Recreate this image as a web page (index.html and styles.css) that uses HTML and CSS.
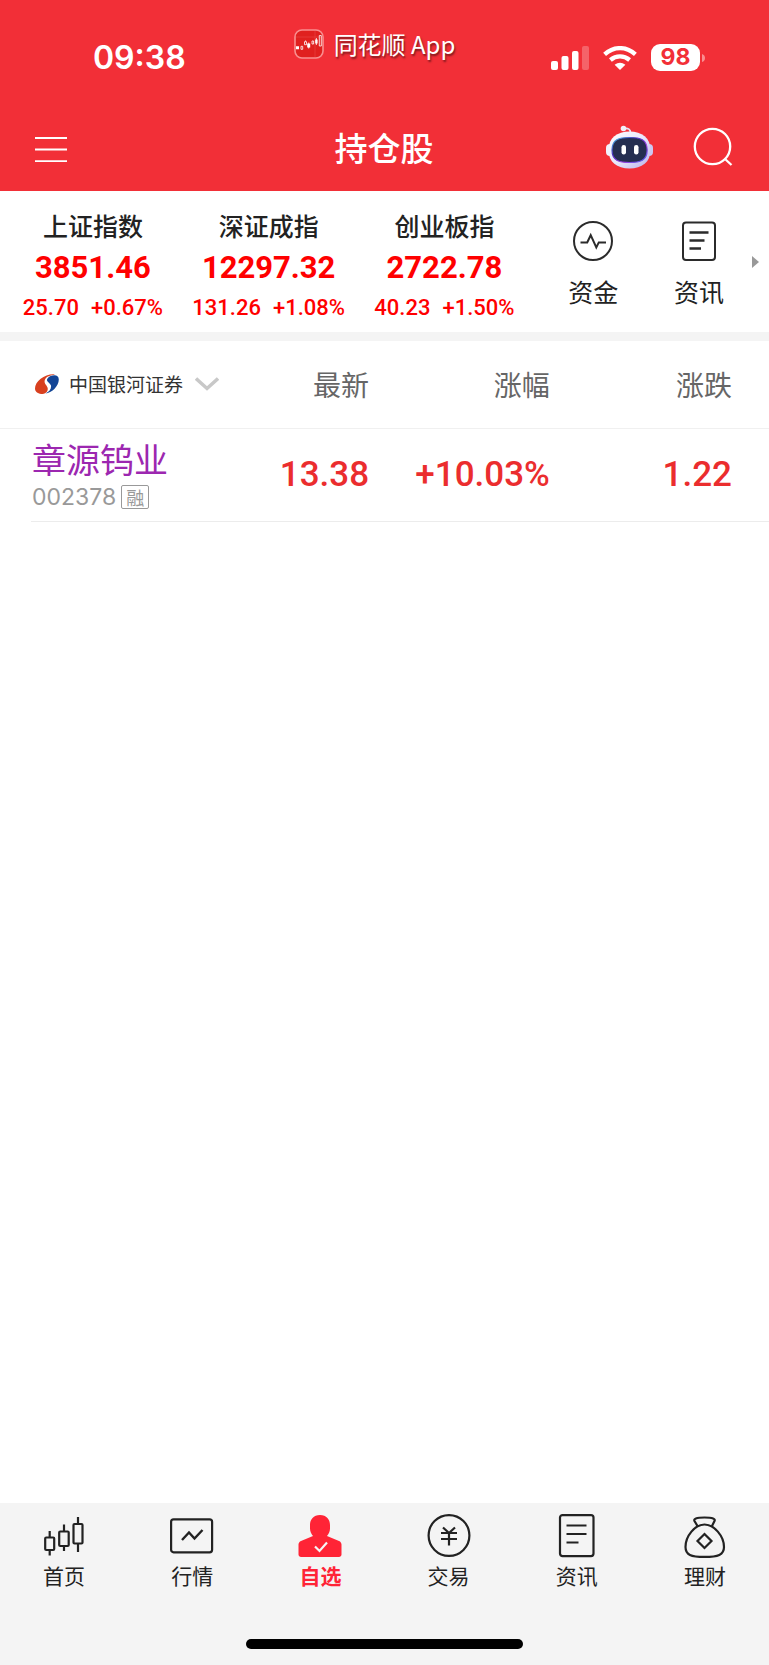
FILE: index.html
```html
<!DOCTYPE html>
<html lang="zh-CN">
<head>
<meta charset="utf-8">
<meta name="viewport" content="width=device-width, initial-scale=1">
<title>持仓股</title>
<link rel="stylesheet" href="styles.css">
</head>
<body>
<div class="app">
  <header class="top">
    <div class="status">
      <time class="clock">09:38</time>
      <div class="brand">
        <svg class="brand-icon" width="30" height="30" viewBox="0 0 30 30" fill="none">
          <rect x="1" y="1" width="28" height="28" rx="7" fill="#e0201f" stroke="#f98f90" stroke-width="1.6"/>
          <path d="M2 8h26M21 2v26" stroke="#ea4646" stroke-width=".6"/>
          <path d="M2 17.300h3v3H2zM13.200 14.500h3v4h-3zM21.200 10.500h2.400v4h-2.400z" fill="#fff"/>
          <path d="M7 17.300h1.700v3H7zM10.500 12.700h2v3h-2zM18 12h1.600v3H18zM25.300 6.500h2v10.500h-2z" stroke="#fff" stroke-width=".8"/>
          <path d="M11.500 11.500v1M14.700 13.500v6M22.400 9v7" stroke="#fff" stroke-width=".8"/>
        </svg>
        <span>同花顺 App</span>
      </div>
      <div class="signals">
        <svg width="38" height="24" viewBox="0 0 38 24" fill="#fff">
          <rect x="0" y="15" width="7" height="9" rx="2"/>
          <rect x="10.500" y="10" width="7" height="14" rx="2"/>
          <rect x="21" y="5" width="6.500" height="19" rx="2"/>
          <rect x="31" y="0" width="7" height="24" rx="2" opacity=".25"/>
        </svg>
        <svg width="34" height="24" viewBox="0 0 34 24" fill="none" stroke="#fff" stroke-width="4.300">
          <path d="M1.600 8.300Q8.600 2.100 17 2.100T32.400 8.300"/>
          <path d="M7.400 14Q11.700 10.300 17 10.300T26.600 14"/>
          <path d="M11.600 18.800Q17 14.700 22.400 18.800L17 24z" fill="#fff" stroke="none"/>
        </svg>
        <div class="battery"><span class="charge">98</span><svg width="3" height="8" viewBox="0 0 3 8"><path d="M0 0Q3 1 3 4T0 8z" fill="#f98e91"/></svg></div>
      </div>
    </div>
    <div class="titlebar">
      <button class="icon-button" type="button" aria-label="菜单">
        <svg width="32" height="27" viewBox="0 0 32 27" stroke="#fff" stroke-width="1.800"><path d="M0 2h32M0 13.500h32M0 25.200h32"/></svg>
      </button>
      <h1 class="title">持仓股</h1>
      <div class="actions">
        <button class="icon-button" type="button" aria-label="智能助手">
          <svg width="47" height="44" viewBox="0 0 47 44">
            <defs>
              <linearGradient id="shell" x1="0" y1="0" x2="1" y2="1"><stop offset="0" stop-color="#fff"/><stop offset=".5" stop-color="#e9e7fa"/><stop offset="1" stop-color="#b9b2ea"/></linearGradient>
              <linearGradient id="rim" x1="0" y1="0" x2="1" y2="1"><stop offset="0" stop-color="#48c9e8"/><stop offset=".35" stop-color="#4a2fc0"/><stop offset=".65" stop-color="#9b3fe0"/><stop offset="1" stop-color="#4462e8"/></linearGradient>
            </defs>
            <path d="M18 3.500Q24.500 2.500 24.500 8" fill="none" stroke="#e6e3f5" stroke-width="1.800"/>
            <circle cx="17.500" cy="3.500" r="2.800" fill="#f1f0fa"/>
            <rect x="0" y="19" width="9" height="12" rx="4" fill="#f2f1fc"/>
            <rect x="38" y="19" width="9" height="12" rx="4" fill="#ccc7f2"/>
            <path d="M23.500 6.500C36 6.500 44.500 13 44.500 25S36 43.500 23.500 43.500 2.500 37 2.500 25 11 6.500 23.500 6.500z" fill="url(#shell)"/>
            <path d="M23.500 12.500C34 12.500 41.200 14.500 41.200 25S34 37.500 23.500 37.500 6 35.500 6 25 13 12.500 23.500 12.500z" fill="#252e50" stroke="url(#rim)" stroke-width="1.200"/>
            <rect x="15.500" y="20" width="4.500" height="9.500" rx="2.200" fill="#fff"/>
            <rect x="28" y="20" width="4.500" height="9.500" rx="2.200" fill="#fff"/>
          </svg>
        </button>
        <button class="icon-button" type="button" aria-label="搜索">
          <svg width="40" height="40" viewBox="0 0 40 40" fill="none" stroke="#fff" stroke-width="2.300"><circle cx="19.500" cy="19.500" r="17.700"/><path d="M31.500 31.500l7 6.500"/></svg>
        </button>
      </div>
    </div>
  </header>

  <section class="market">
    <div class="indices">
      <a class="index" href="#sh"><span class="index-name">上证指数</span><strong class="index-value">3851.46</strong><span class="index-change"><span>25.70</span><span>+0.67%</span></span></a>
      <a class="index" href="#sz"><span class="index-name">深证成指</span><strong class="index-value">12297.32</strong><span class="index-change"><span>131.26</span><span>+1.08%</span></span></a>
      <a class="index" href="#cyb"><span class="index-name">创业板指</span><strong class="index-value">2722.78</strong><span class="index-change"><span>40.23</span><span>+1.50%</span></span></a>
    </div>
    <div class="tools">
      <a class="tool" href="#funds">
        <svg width="40" height="40" viewBox="0 0 40 40" fill="none" stroke="#2b2b2b" stroke-width="2"><circle cx="20" cy="20" r="19"/><path d="M7.500 21.500h6.700l3.500-7.300 5.600 12.200 2.500-5H33"/></svg>
        <span>资金</span>
      </a>
      <a class="tool" href="#news">
        <svg width="34" height="40" viewBox="0 0 34 40" fill="none" stroke="#2b2b2b" stroke-width="2"><rect x="1" y="1.500" width="32" height="37.500" rx="3"/><path d="M7.500 11.500h19M7.500 19.500h15M7.500 27.500h11.500" stroke-width="2.300"/></svg>
        <span>资讯</span>
      </a>
    </div>
    <svg class="more" width="7" height="12" viewBox="0 0 7 12"><path d="M0 0l7 6-7 6z" fill="#999"/></svg>
  </section>

  <main class="holdings">
    <table class="table">
      <thead>
        <tr>
          <th class="col-stock" scope="col">
            <button class="broker" type="button">
              <svg width="24" height="20" viewBox="0 0 24 20"><path d="M18.500.2C9 .2 0 7.500 0 14.500 0 18.500 4 20 7.500 20 11.500 19.500 13.500 16.500 12.500 13.500 11.500 10.500 8.500 9.500 10 5.500 11.500 2.500 15 1.500 20 .8z" fill="#d8401f"/><path d="M12.500 4.500C15.500.8 23.800-.5 23.800 5.500 23.800 12.500 16.500 19 10.500 19.500 14.500 17.500 16.500 14.500 16 11.500 15 8.500 10.500 7.500 12.500 4.500z" fill="#134596"/></svg>
              <span>中国银河证券</span>
              <svg class="chevron" width="24" height="14" viewBox="0 0 24 14" fill="none" stroke="#c8c8c8" stroke-width="3.500"><path d="M1 1.500l11 10 11-10"/></svg>
            </button>
          </th>
          <th class="col-price" scope="col">最新</th>
          <th class="col-rate" scope="col">涨幅</th>
          <th class="col-diff" scope="col">涨跌</th>
        </tr>
      </thead>
      <tbody>
        <tr>
          <td><a class="stock" href="#002378"><span class="stock-name">章源钨业</span><span class="stock-meta"><span class="stock-code">002378</span><span class="tag">融</span></span></a></td>
          <td>13.38</td>
          <td>+10.03%</td>
          <td>1.22</td>
        </tr>
      </tbody>
    </table>
  </main>

  <footer class="bottom">
    <nav class="tabs">
      <a class="tab" href="#home">
        <svg width="44" height="44" viewBox="0 0 44 44" fill="none" stroke="#222" stroke-width="2.200"><rect x="3.200" y="23.500" width="9" height="12.500" rx="1"/><path d="M7.700 17v6.500M7.700 36v5.500"/><rect x="17.200" y="17.500" width="9.500" height="14.500" rx="1"/><path d="M22 10.500v7M22 32v5"/><rect x="31.500" y="10" width="9" height="19.500" rx="1"/><path d="M36 3v7M36 29.500V38"/></svg>
        <span>首页</span>
      </a>
      <a class="tab" href="#quotes">
        <svg width="44" height="44" viewBox="0 0 44 44" fill="none" stroke="#222" stroke-width="2.200"><rect x="1.100" y="5.300" width="41" height="33" rx="2.500"/><path d="M12 26l7-7.500 5.500 6 8-8.500" stroke-width="2.400"/></svg>
        <span>行情</span>
      </a>
      <a class="tab tab-active" href="#watchlist" aria-current="page">
        <svg width="44" height="44" viewBox="0 0 44 44"><path d="M22 1C28.500 1 32 5.500 32 11v3.500C32 18 30.500 20 29 22l12 5c1.500.6 2.500 2 2.500 3.500v10c0 1.500-1.200 2.500-2.500 2.500H3C1.700 43 .5 42 .5 40.500v-10C.5 29 1.500 27.600 3 27l12-5c-1.500-2-3-4-3-7.500V11C12 5.500 15.500 1 22 1z" fill="#ff2436"/><path d="M17 32.500l4.500 4.500 7.500-8.500" fill="none" stroke="#f5f5f5" stroke-width="2.200"/></svg>
        <span>自选</span>
      </a>
      <a class="tab" href="#trade">
        <svg width="44" height="44" viewBox="0 0 44 44" fill="none" stroke="#222" stroke-width="2.200"><circle cx="22" cy="21.500" r="20.400"/><path d="M16 13.500l6 5.500 6-5.500M14 19h16M14 25h16M22 19v12.500"/></svg>
        <span>交易</span>
      </a>
      <a class="tab" href="#info">
        <svg width="44" height="44" viewBox="0 0 44 44" fill="none" stroke="#222" stroke-width="2.200"><rect x="5" y="1.100" width="33.500" height="41" rx="2.500"/><path d="M11.500 11.500h20M11.500 20h20M11.500 28.500h12"/></svg>
        <span>资讯</span>
      </a>
      <a class="tab" href="#wealth">
        <svg width="44" height="44" viewBox="0 0 44 44" fill="none" stroke="#222" stroke-width="2.200"><path d="M14.500 12L11.500 7C10.500 5 13 3.500 21.500 3.500S32.500 5 31.500 7L29 12"/><path d="M21.500 10.500C31 10.500 41 22 41 33 41 41 35 42.900 21.500 42.900S2.500 41 2.500 33C2.500 22 12 10.500 21.500 10.500z"/><path d="M21.500 20l7 7-7 7-7-7z"/></svg>
        <span>理财</span>
      </a>
    </nav>
    <div class="home-bar"></div>
  </footer>
</div>
</body>
</html>
```
FILE: styles.css
```css
* {
  box-sizing: border-box;
}

body {
  margin: 0;
  background: #fff;
  color: #222;
  font-family: "Noto Sans CJK SC", sans-serif;
}

a {
  color: inherit;
  text-decoration: none;
}

button {
  padding: 0;
  border: 0;
  background: none;
  color: inherit;
  font: inherit;
}

svg {
  display: block;
  flex: none;
}

.app {
  display: flex;
  flex-direction: column;
  min-height: 100vh;
}

/* Header */
.top {
  padding-bottom: 16px;
  background: #f22f37;
  color: #fff;
}

.status {
  display: grid;
  grid-template-columns: 1fr auto 1fr;
  align-items: center;
  height: 115px;
  padding: 0 64px 0 44px;
}

.clock {
  padding-left: 49px;
  font: 600 32px/40px Inter, sans-serif;
}

.brand {
  display: flex;
  align-items: center;
  gap: 10px;
  padding-bottom: 28px;
  font-size: 24px;
  line-height: 32px;
  text-shadow: 1px 2px 2px rgba(0, 0, 0, 0.5);
}

.signals {
  display: flex;
  justify-content: flex-end;
  align-items: center;
  gap: 14px;
}

.battery {
  display: flex;
  align-items: center;
  gap: 2px;
}

.charge {
  width: 49px;
  border-radius: 9px;
  background: #fff;
  color: #f22f37;
  font: 700 23px/27px Inter, sans-serif;
  text-align: center;
}

.titlebar {
  display: grid;
  grid-template-columns: 1fr auto 1fr;
  align-items: center;
  height: 60px;
  padding: 8px 36px 0 35px;
}

.title {
  margin: 0;
  padding-bottom: 4px;
  font-size: 33px;
  font-weight: 500;
  line-height: 48px;
}

.actions {
  display: flex;
  justify-content: flex-end;
  align-items: center;
  gap: 40px;
  padding-bottom: 4px;
}

/* Index strip */
.market {
  display: flex;
  align-items: center;
  gap: 8px;
  height: 150px;
  padding: 6px 10px 0 5px;
  border-bottom: 9px solid #f4f4f4;
}

.indices {
  display: flex;
  flex: 528;
}

.index {
  display: flex;
  flex: 1;
  flex-direction: column;
  align-items: center;
}

.index-name {
  font-size: 25px;
  font-weight: 500;
  line-height: 38px;
}

.index-value {
  color: #f00;
  font: 700 31px/48px Roboto, sans-serif;
}

.index-change {
  display: flex;
  gap: 12px;
  color: #f00;
  font: 500 22px/32px Roboto, sans-serif;
}

.tools {
  display: flex;
  flex: 212;
}

.tool {
  display: flex;
  flex: 1;
  flex-direction: column;
  align-items: center;
  gap: 12px;
  font-size: 25px;
  line-height: 36px;
}

.more {
  margin-bottom: 6px;
  margin-left: -8px;
}

/* Holdings table */
.holdings {
  flex: 1;
}

.table {
  width: 100%;
  border-collapse: collapse;
  table-layout: fixed;
}

.table th,
.table td {
  padding: 0;
  text-align: right;
}

.table th {
  height: 87px;
  border-bottom: 1px solid #f0f0f0;
  color: #666;
  font-size: 28px;
  font-weight: 400;
}

.table td {
  height: 94px;
  color: #eb2d2e;
  font: 500 35px/48px Roboto, sans-serif;
}

.table tbody tr {
  background: linear-gradient(#ececec, #ececec) 31px 100% / 100% 1px no-repeat;
}

.table th:first-child,
.table td:first-child {
  padding-left: 32px;
  text-align: left;
}

.table th:last-child,
.table td:last-child {
  padding-right: 37px;
}

.col-stock {
  width: 33%;
}

.col-price {
  width: 15%;
}

.col-diff {
  width: 28.5%;
}

.broker {
  display: flex;
  align-items: center;
  gap: 10px;
  padding-left: 3px;
  color: #333;
  font-size: 19px;
  line-height: 28px;
}

.chevron {
  margin-left: 2px;
}

.stock {
  display: flex;
  flex-direction: column;
  gap: 2px;
  padding-bottom: 2px;
  font-family: "Noto Sans CJK SC", sans-serif;
}

.stock-name {
  color: #9c27b0;
  font-size: 34px;
  font-weight: 400;
  line-height: 44px;
}

.stock-meta {
  display: flex;
  align-items: center;
  gap: 5px;
  color: #999;
  font-weight: 400;
}

.stock-code {
  font: 400 23px/28px Inter, sans-serif;
}

.tag {
  width: 28px;
  border: 1px solid #999;
  border-radius: 2px;
  font-size: 18px;
  line-height: 22px;
  text-align: center;
}

/* Bottom navigation */
.bottom {
  padding-bottom: 16px;
  background: #f4f4f4;
}

.tabs {
  display: grid;
  grid-template-columns: repeat(6, 1fr);
  padding-top: 11px;
}

.tab {
  display: flex;
  flex-direction: column;
  align-items: center;
  gap: 1px;
  font-size: 21px;
  line-height: 32px;
}

.tab-active {
  color: #ff2436;
  font-weight: 700;
}

.home-bar {
  width: 36%;
  height: 10px;
  margin: 48px auto 0;
  border-radius: 5px;
  background: #000;
}
```
